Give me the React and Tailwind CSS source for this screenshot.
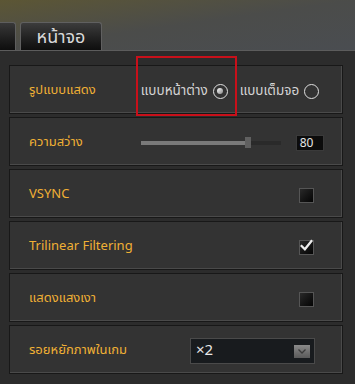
import React from 'react';

const label = 'text-[13px] text-[#f0b035]';

function Row({ children, className = '' }) {
  return (
    <div
      className={`relative flex h-[49px] items-center border border-[#181818] bg-[#333333] pl-[19px] pt-[3px] shadow-[inset_-1px_-1px_0_#4a4a4a] ${className}`}
    >
      {children}
    </div>
  );
}

function Check({ checked }) {
  return (
    <div className="ml-auto mr-[28px] flex h-[15px] w-[15px] items-center justify-center border border-[#555] bg-gradient-to-br from-[#2a2a2a] to-[#050505]">
      {checked && (
        <svg width="16" height="14" viewBox="0 0 16 14" className="-mt-[2px]">
          <path d="M2 7 L6 11 L14 1" fill="none" stroke="#ececec" strokeWidth="2.8" strokeLinecap="square" />
        </svg>
      )}
    </div>
  );
}

function Radio({ on }) {
  return (
    <div className="flex h-[15px] w-[15px] items-center justify-center rounded-full border-[1.5px] border-[#e0e0e0]">
      {on && <div className="h-[6px] w-[6px] rounded-full bg-gradient-to-br from-white to-[#888]" />}
    </div>
  );
}

export default function App() {
  return (
    <div
      className="relative h-[384px] w-[355px] overflow-hidden bg-[#2c2c2c]"
      style={{ fontFamily: '"Noto Sans Thai", "Noto Sans", "Liberation Sans", sans-serif' }}
    >
      {/* header with tabs */}
      <div className="relative flex h-[51px] items-end gap-[4px] border-b border-[#5c5c5c] bg-gradient-to-br from-[#5c5634] via-[#4b4c4a] to-[#4a4d51]">
        <div className="h-[28px] w-[16px] rounded-tr-[3px] border-r border-t border-[#5e5e5e] bg-gradient-to-b from-[#383838] to-[#0e0e0e]" />
        <div className="flex h-[28px] w-[82px] items-center justify-center rounded-t-[3px] border-x border-t border-[#606060] bg-gradient-to-b from-[#3c3c3c] to-[#0e0e0e] pt-[1px] text-[18px] text-[#d8d8d8]">
          หน้าจอ
        </div>
      </div>

      <div className="flex flex-col gap-[3px] pl-[9px] pr-[12px] pt-[14px]">
        <Row>
          <span className={label}>รูปแบบแสดง</span>
          <div className="ml-[45px] flex items-center gap-[5px] text-[13.5px] text-[#d4d4d4]">
            <span>แบบหน้าต่าง</span>
            <Radio on />
          </div>
          <div className="ml-[12px] flex items-center gap-[5px] text-[13.5px] text-[#d4d4d4]">
            <span>แบบเต็มจอ</span>
            <Radio />
          </div>
        </Row>

        <Row>
          <span className={label}>ความสว่าง</span>
          <div className="relative ml-[58px] h-[4px] w-[140px] bg-[#2a2a2a]">
            <div className="h-full w-[106px] bg-[#7a7a7a]" />
            <div className="absolute left-[104px] top-[-4px] h-[11px] w-[6px] bg-[#606060]" />
          </div>
          <div className="ml-[15px] flex h-[16px] w-[28px] items-center border border-[#3a3a3a] bg-[#0c0c0c] pl-[3px] text-[12px] text-[#e6e6e6]">
            80
          </div>
        </Row>

        <Row>
          <span className={label}>VSYNC</span>
          <Check />
        </Row>

        <Row>
          <span className={label}>Trilinear Filtering</span>
          <Check checked />
        </Row>

        <Row>
          <span className={label}>แสดงแสงเงา</span>
          <Check />
        </Row>

        <Row>
          <span className={label}>รอยหยักภาพในเกม</span>
          <div className="ml-auto mr-[27px] flex h-[26px] w-[125px] items-center border border-[#4a4a4a] bg-[#181b1e] pl-[5px] pr-[4px] text-[15px] text-[#e8e8e8]">
            <span>×2</span>
            <div className="ml-auto flex h-[13px] w-[16px] items-center justify-center bg-gradient-to-b from-[#8a8a8a] to-[#5a5a5a]">
              <svg width="8" height="5" viewBox="0 0 8 5">
                <path d="M0.5 0.5 L4 4 L7.5 0.5" fill="none" stroke="#3a3a3a" strokeWidth="1.3" />
              </svg>
            </div>
          </div>
        </Row>
      </div>

      {/* red highlight box */}
      <div className="absolute left-[136px] top-[56px] h-[60px] w-[101px] border-2 border-[#c8101a]" />
    </div>
  );
}
